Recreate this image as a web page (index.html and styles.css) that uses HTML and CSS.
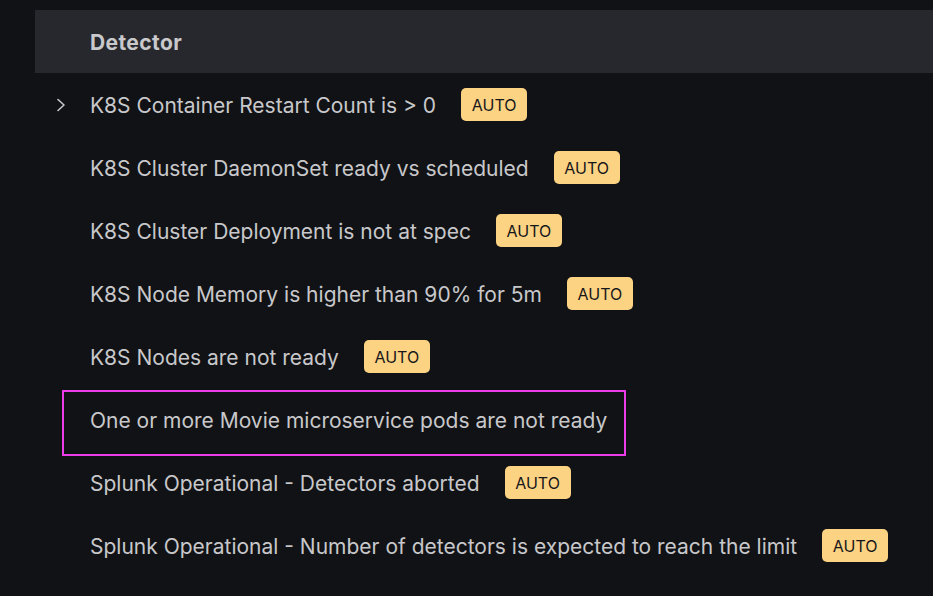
FILE: index.html
```html
<!DOCTYPE html>
<html>
<head>
<meta charset="utf-8">
<link rel="stylesheet" href="styles.css">
</head>
<body>
<div class="table">
  <div class="header"><span class="th">Detector</span></div>
  <div class="row">
    <span class="chev"><svg width="10" height="14" viewBox="0 0 10 14"><path d="M2 1.5 L8 7 L2 12.5" fill="none" stroke="#c8c8cc" stroke-width="1.6" stroke-linecap="round" stroke-linejoin="round"/></svg></span>
    <span class="name">K8S Container Restart Count is &gt; 0</span><span class="badge">AUTO</span>
  </div>
  <div class="row"><span class="name">K8S Cluster DaemonSet ready vs scheduled</span><span class="badge">AUTO</span></div>
  <div class="row"><span class="name">K8S Cluster Deployment is not at spec</span><span class="badge">AUTO</span></div>
  <div class="row"><span class="name">K8S Node Memory is higher than 90% for 5m</span><span class="badge">AUTO</span></div>
  <div class="row"><span class="name">K8S Nodes are not ready</span><span class="badge">AUTO</span></div>
  <div class="row highlighted"><span class="name">One or more Movie microservice pods are not ready</span><span class="mark"></span></div>
  <div class="row"><span class="name">Splunk Operational - Detectors aborted</span><span class="badge">AUTO</span></div>
  <div class="row"><span class="name">Splunk Operational - Number of detectors is expected to reach the limit</span><span class="badge">AUTO</span></div>
</div>
</body>
</html>
```
FILE: styles.css
```css
html, body {
  margin: 0;
  padding: 0;
  background: #111215;
  width: 933px;
  height: 596px;
  overflow: hidden;
  font-family: Inter, "Noto Sans", sans-serif;
}
.table {
  padding-top: 10px;
  padding-left: 35px;
}
.header {
  height: 63px;
  background: #27282d;
  display: flex;
  align-items: center;
  padding-left: 55px;
}
.th {
  color: #c9c9cc;
  font-weight: 700;
  font-size: 21px;
  letter-spacing: 0.4px;
  padding-top: 2px;
}
.row {
  position: relative;
  height: 63px;
  display: flex;
  align-items: center;
  padding-left: 55px;
}
.chev {
  position: absolute;
  left: 21px;
  top: 25px;
  display: flex;
}
.name {
  color: #c8c8cb;
  font-size: 21px;
  padding-top: 2px;
}
.badge {
  margin-left: 25px;
  background: #fcd283;
  color: #17171a;
  font-size: 16px;
  width: 66px;
  height: 33px;
  border-radius: 5px;
  display: flex;
  align-items: center;
  justify-content: center;
}
.mark {
  position: absolute;
  left: 27px;
  top: 2px;
  width: 560px;
  height: 62px;
  border: 2px solid #ec3ce9;
}
```
